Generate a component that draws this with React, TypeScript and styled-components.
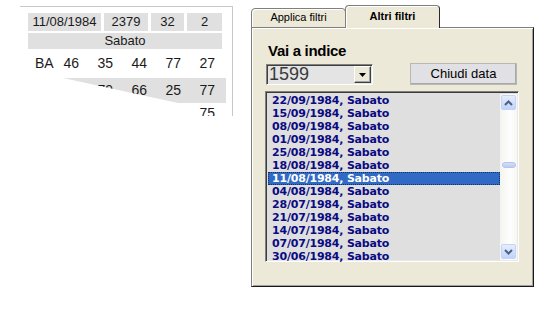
import React from "react";
import styled, { createGlobalStyle } from "styled-components";

const GlobalStyle = createGlobalStyle`
  html, body {
    margin: 0;
    padding: 0;
    background: #ffffff;
  }
`;

const Page = styled.div`
  display: flex;
  align-items: flex-start;
  width: 556px;
  height: 311px;
  padding-top: 6px;
  box-sizing: border-box;
`;

/* ---------- left: estrazione ---------- */

const DrawPanel = styled.div`
  margin-left: 20px;
  width: 213px;
  height: 110px;
  box-sizing: border-box;
  border-top: 1px solid #c8c8c8;
  border-right: 1px solid #c8c8c8;
  padding: 6px 0 0 8px;
  overflow: hidden;
  font-family: "Liberation Sans", Arial, sans-serif;
  color: #1a1a1a;
`;

const HeadRow = styled.div`
  display: flex;
  gap: 3px;
  height: 18px;
`;

const HeadCell = styled.div<{ $w: number }>`
  width: ${({ $w }) => $w}px;
  background: #e0e0e0;
  font-size: 13px;
  line-height: 18px;
  text-align: center;
`;

const DayRow = styled.div`
  margin-top: 2px;
  width: 194px;
  height: 16px;
  background: #e0e0e0;
  font-size: 13px;
  line-height: 16px;
  text-align: center;
`;

const NumRow = styled.div<{ $h: number; $shade?: boolean }>`
  display: grid;
  grid-template-columns: 17px repeat(5, 34px);
  height: ${({ $h }) => $h}px;
  line-height: ${({ $h }) => $h}px;
  font-size: 14px;
  width: 198px;
  background: ${({ $shade }) => ($shade ? "#e0e0e0" : "transparent")};
  clip-path: ${({ $shade }) =>
    $shade ? "polygon(35px 0, 100% 0, 100% 100%, 150px 100%)" : "none"};
`;

const Wheel = styled.div`
  min-width: 0;
  white-space: nowrap;
  padding-left: 7px;
`;

const Num = styled.div`
  text-align: right;
  white-space: nowrap;
`;

/* ---------- right: tab control ---------- */

const TabBox = styled.div`
  margin-left: 18px;
  display: flex;
  flex-direction: column;
  font-family: "Liberation Sans", Arial, sans-serif;
`;

const TabStrip = styled.div`
  display: flex;
  align-items: flex-end;
  height: 22px;
  position: relative;
  z-index: 1;
  margin-bottom: -1px;
`;

const Tab = styled.div<{ $active?: boolean }>`
  box-sizing: border-box;
  width: ${({ $active }) => ($active ? 95 : 95)}px;
  height: ${({ $active }) => ($active ? 23 : 20)}px;
  margin-left: ${({ $active }) => ($active ? -1 : 0)}px;
  background: #ece9d8;
  border: 1px solid #7f7f7f;
  border-right-color: ${({ $active }) => ($active ? "#2a2a2a" : "#7f7f7f")};
  border-bottom: ${({ $active }) => ($active ? "none" : "1px solid #7f7f7f")};
  border-radius: 4px 4px 0 0;
  box-shadow: inset 1px 1px 0 #ffffff;
  font-size: 11px;
  font-weight: ${({ $active }) => ($active ? 700 : 400)};
  line-height: ${({ $active }) => ($active ? 20 : 17)}px;
  text-align: center;
  color: #000;
`;

const TabPage = styled.div`
  box-sizing: border-box;
  width: 283px;
  height: 260px;
  background: #ece9d8;
  border: 1px solid #7f7f7f;
  border-right-color: #1a1a1a;
  border-bottom-color: #1a1a1a;
  box-shadow: inset 1px 1px 0 #ffffff, inset -1px -1px 0 #a0a0a0;
  padding: 14px 0 0 14px;
`;

const Caption = styled.div`
  margin-left: 2px;
  height: 18px;
  font-size: 15px;
  font-weight: 700;
  letter-spacing: -0.3px;
  line-height: 18px;
  color: #000;
`;

const ControlRow = styled.div`
  margin-top: 3px;
  display: flex;
  align-items: flex-end;
  height: 22px;
`;

const Combo = styled.div`
  box-sizing: border-box;
  width: 107px;
  height: 21px;
  display: flex;
  background: #e4e4e4;
  border: 1px solid #808080;
  border-right-color: #ffffff;
  border-bottom-color: #ffffff;
  box-shadow: inset 1px 1px 0 #404040;
`;

const ComboText = styled.div`
  flex: 1;
  padding-left: 2px;
  font-size: 18px;
  line-height: 19px;
  color: #3a3a3a;
`;

const DropButton = styled.div`
  box-sizing: border-box;
  width: 17px;
  margin: 1px 1px 0 0;
  height: 17px;
  background: #ece9d8;
  border: 1px solid #ffffff;
  border-right-color: #404040;
  border-bottom-color: #404040;
  box-shadow: inset -1px -1px 0 #a0a0a0;
  display: flex;
  align-items: center;
  justify-content: center;
`;

const Button = styled.div`
  box-sizing: border-box;
  margin-left: 37px;
  width: 107px;
  height: 22px;
  background: #e1e0e4;
  border: 1px solid #ffffff;
  border-right-color: #6f6f6f;
  border-bottom-color: #6f6f6f;
  box-shadow: inset -1px -1px 0 #a8a8a8, 0 0 0 0 transparent;
  outline: 1px solid #b8b8b8;
  outline-offset: -1px;
  font-size: 13px;
  line-height: 20px;
  text-align: center;
  color: #000;
`;

const ListBox = styled.div`
  box-sizing: border-box;
  margin: 6px 0 0 -1px;
  width: 254px;
  height: 171px;
  display: flex;
  background: #dfdfdf;
  border: 1px solid #7f7f7f;
  border-right-color: #ffffff;
  border-bottom-color: #ffffff;
  box-shadow: inset 1px 1px 0 #3c3c3c, inset -1px -1px 0 #e8e8e8;
  padding: 2px 1px 1px 2px;
`;

const Items = styled.div`
  flex: 1;
  font-family: "DejaVu Sans", Verdana, sans-serif;
  font-size: 11px;
  font-weight: 700;
`;

const Item = styled.div<{ $selected?: boolean }>`
  height: 13px;
  line-height: 13px;
  padding-left: 4px;
  letter-spacing: -0.2px;
  white-space: nowrap;
  color: ${({ $selected }) => ($selected ? "#ffffff" : "#0b0b82")};
  background: ${({ $selected }) => ($selected ? "#316ac5" : "transparent")};
  outline: ${({ $selected }) => ($selected ? "1px dotted #12306e" : "none")};
  outline-offset: -1px;
`;

const ScrollBar = styled.div`
  width: 17px;
  display: flex;
  flex-direction: column;
  align-items: center;
  background: linear-gradient(90deg, #f3f3ef, #fefefe 60%, #f6f6f2);
  padding: 1px 0 1px;
  box-sizing: border-box;
`;

const ScrollButton = styled.div`
  box-sizing: border-box;
  width: 15px;
  height: 15px;
  border: 1px solid #c3d3fd;
  border-radius: 2px;
  background: linear-gradient(180deg, #e6eefc, #c1d3fb);
  display: flex;
  align-items: center;
  justify-content: center;
`;

const Thumb = styled.div`
  margin-top: 52px;
  width: 14px;
  height: 6px;
  box-sizing: border-box;
  border: 1px solid #b2c3ec;
  border-radius: 3px;
  background: linear-gradient(180deg, #d4dffb, #bccbf2);
`;

const Spacer = styled.div`
  flex: 1;
`;

const Chevron: React.FC<{ up?: boolean }> = ({ up }) => (
  <svg width="9" height="6" viewBox="0 0 9 6">
    <polyline
      points={up ? "1,5 4.5,1.5 8,5" : "1,1 4.5,4.5 8,1"}
      fill="none"
      stroke="#4d6185"
      strokeWidth="2"
    />
  </svg>
);

const dates = [
  "22/09/1984",
  "15/09/1984",
  "08/09/1984",
  "01/09/1984",
  "25/08/1984",
  "18/08/1984",
  "11/08/1984",
  "04/08/1984",
  "28/07/1984",
  "21/07/1984",
  "14/07/1984",
  "07/07/1984",
  "30/06/1984",
];

export default function App() {
  return (
    <>
      <GlobalStyle />
      <Page>
        <DrawPanel>
          <HeadRow>
            <HeadCell $w={73}>11/08/1984</HeadCell>
            <HeadCell $w={44}>2379</HeadCell>
            <HeadCell $w={33}>32</HeadCell>
            <HeadCell $w={35}>2</HeadCell>
          </HeadRow>
          <DayRow>Sabato</DayRow>
          <NumRow $h={28}>
            <Wheel>BA</Wheel>
            <Num>46</Num>
            <Num>35</Num>
            <Num>44</Num>
            <Num>77</Num>
            <Num>27</Num>
          </NumRow>
          <NumRow $h={25} $shade style={{ marginTop: 1 }}>
            <Wheel></Wheel>
            <Num></Num>
            <Num>79</Num>
            <Num>66</Num>
            <Num>25</Num>
            <Num>77</Num>
          </NumRow>
          <NumRow $h={20}>
            <Wheel></Wheel>
            <Num></Num>
            <Num></Num>
            <Num></Num>
            <Num></Num>
            <Num>75</Num>
          </NumRow>
        </DrawPanel>

        <TabBox>
          <TabStrip>
            <Tab>Applica filtri</Tab>
            <Tab $active>Altri filtri</Tab>
          </TabStrip>
          <TabPage>
            <Caption>Vai a indice</Caption>
            <ControlRow>
              <Combo>
                <ComboText>1599</ComboText>
                <DropButton>
                  <svg width="7" height="4" viewBox="0 0 7 4">
                    <polygon points="0,0 7,0 3.5,4" fill="#000" />
                  </svg>
                </DropButton>
              </Combo>
              <Button>Chiudi data</Button>
            </ControlRow>
            <ListBox>
              <Items>
                {dates.map((d) => (
                  <Item key={d} $selected={d === "11/08/1984"}>
                    {d}, Sabato
                  </Item>
                ))}
              </Items>
              <ScrollBar>
                <ScrollButton>
                  <Chevron up />
                </ScrollButton>
                <Thumb />
                <Spacer />
                <ScrollButton>
                  <Chevron />
                </ScrollButton>
              </ScrollBar>
            </ListBox>
          </TabPage>
        </TabBox>
      </Page>
    </>
  );
}
